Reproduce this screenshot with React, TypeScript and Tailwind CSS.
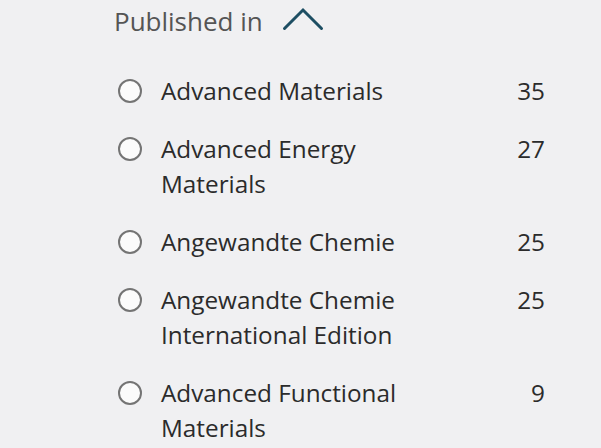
import React from "react";

const items = [
  { name: "Advanced Materials", count: 35 },
  { name: "Advanced Energy Materials", count: 27 },
  { name: "Angewandte Chemie", count: 25 },
  { name: "Angewandte Chemie International Edition", count: 25 },
  { name: "Advanced Functional Materials", count: 9 },
];

export default function App() {
  return (
    <div
      className="w-[601px] h-[448px] overflow-hidden bg-[#f0f0f2] pl-[114px] pr-[56px] pt-[3px]"
      style={{ fontFamily: '"Open Sans", sans-serif' }}
    >
      <div className="flex items-center gap-[19px] h-[36px]">
        <span className="text-[26px] text-[#555555]">Published in</span>
        <svg width="42" height="26" viewBox="0 0 42 26" className="mt-[-4px]">
          <polyline points="2.5,22.5 21,4 39.5,22.5" fill="none" stroke="#1d4e63" strokeWidth="3" strokeLinecap="round" strokeLinejoin="miter" />
        </svg>
      </div>
      <ul className="mt-[34px] flex flex-col gap-[23px]">
        {items.map((it) => (
          <li key={it.name} className="flex items-start text-[24.3px] leading-[35px] text-[#2b2b2b]">
            <span className="mt-[6px] ml-[4px] w-[24px] h-[24px] rounded-full border-2 border-[#747474] bg-[#fbfbfb] shrink-0" />
            <span className="ml-[19px] w-[250px]">{it.name}</span>
            <span className="ml-auto">{it.count}</span>
          </li>
        ))}
      </ul>
    </div>
  );
}
